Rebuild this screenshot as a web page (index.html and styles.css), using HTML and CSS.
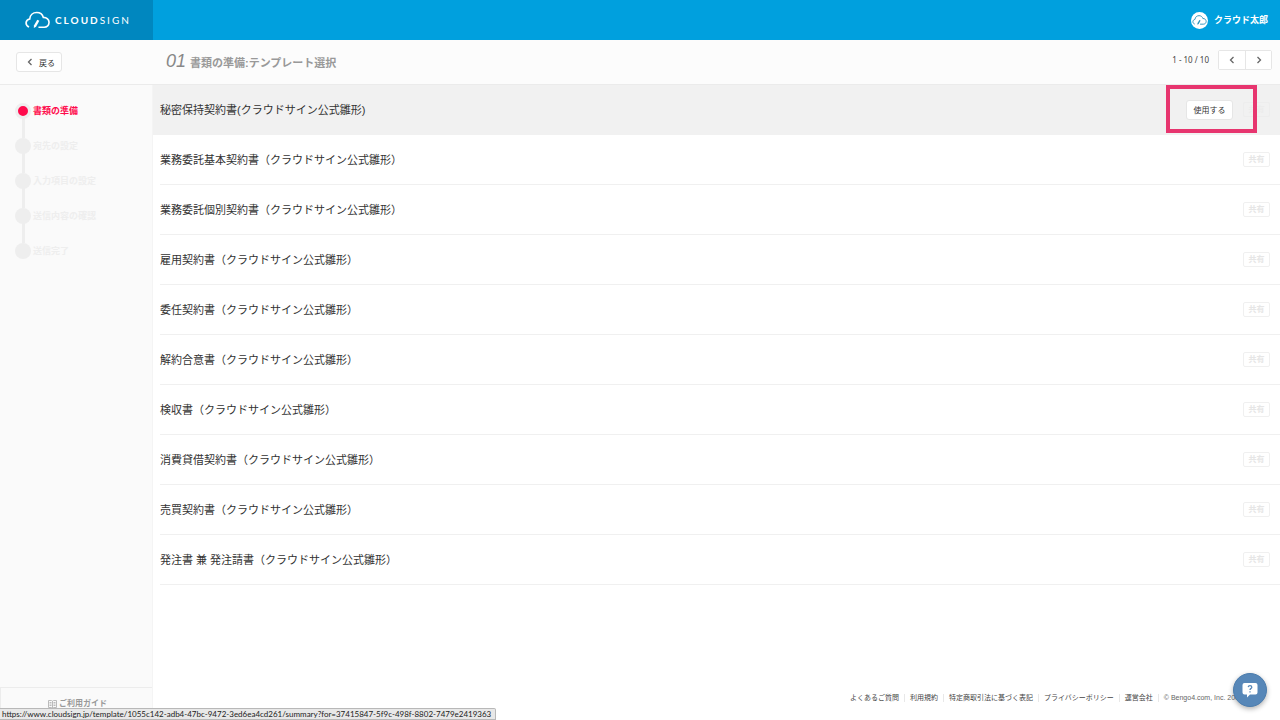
FILE: index.html
```html
<!DOCTYPE html>
<html lang="ja">
<head>
<meta charset="utf-8">
<meta name="viewport" content="width=device-width, initial-scale=1">
<title>CLOUDSIGN</title>
<link rel="stylesheet" href="styles.css">
</head>
<body>
<svg class="defs" aria-hidden="true">
  <symbol id="cloud" viewBox="0 0 26 18">
    <path d="M4.2 16.4C-.2 14.4 .2 8.700 4.900 7.900C5.200 3.800 8.200 1.200 12.200 1.200C15.600 1.200 18.200 3.200 19.100 6.300C22.600 6.200 25 8.600 25 11.400C25 14.400 22.800 16.500 20 16.500H14" fill="none" stroke="currentColor" stroke-width="1.700"/>
    <path d="M12.800 8.800L14.900 9.900L11.500 16L9.200 17.400L9.300 14.800Z" fill="currentColor"/>
  </symbol>
</svg>
<header class="topbar">
  <a class="brand" href="#"><svg class="brand-mark" aria-hidden="true"><use href="#cloud"/></svg><span class="brand-name"><b>CLOUD</b>SIGN</span></a>
  <a class="user" href="#"><span class="avatar"><svg class="avatar-mark" aria-hidden="true"><use href="#cloud"/></svg></span>クラウド太郎</a>
</header>
<div class="subbar">
  <div class="back-area"><button class="btn back" type="button"><svg class="chevron" viewBox="0 0 6 8" aria-hidden="true"><path d="M4.5 1L1.5 4L4.5 7"/></svg>戻る</button></div>
  <h1 class="title"><span class="title-number">01</span>書類の準備:テンプレート選択</h1>
  <div class="pager">
    <span class="range">1 - 10 / 10</span>
    <div class="pager-buttons">
      <button type="button" aria-label="前へ"><svg class="chevron" viewBox="0 0 6 8" aria-hidden="true"><path d="M4.5 1L1.5 4L4.5 7"/></svg></button>
      <button type="button" aria-label="次へ"><svg class="chevron" viewBox="0 0 6 8" aria-hidden="true"><path d="M1.5 1L4.5 4L1.5 7"/></svg></button>
    </div>
  </div>
</div>
<div class="body">
  <aside class="sidebar">
    <ol class="steps">
      <li class="step current">書類の準備</li>
      <li class="step">宛先の設定</li>
      <li class="step">入力項目の設定</li>
      <li class="step">送信内容の確認</li>
      <li class="step">送信完了</li>
    </ol>
    <a class="guide" href="#"><svg class="book" viewBox="0 0 9 10" aria-hidden="true"><path d="M.5 1.5H3.5L4.5 2.2L5.5 1.5H8.5V8.5H5.5L4.5 9.2L3.5 8.5H.5ZM4.5 2V9M1.5 3.5H3.5M1.5 5H3.5M1.5 6.5H3.5M5.5 3.5H7.5M5.5 5H7.5M5.5 6.5H7.5"/></svg>ご利用ガイド</a>
  </aside>
  <main class="main">
    <ul class="templates">
      <li class="row selected"><span class="name">秘密保持契約書(クラウドサイン公式雛形)</span><span class="use"><button class="btn" type="button">使用する</button></span><span class="share">共有</span></li>
      <li class="row"><span class="name">業務委託基本契約書（クラウドサイン公式雛形）</span><span class="share">共有</span></li>
      <li class="row"><span class="name">業務委託個別契約書（クラウドサイン公式雛形）</span><span class="share">共有</span></li>
      <li class="row"><span class="name">雇用契約書（クラウドサイン公式雛形）</span><span class="share">共有</span></li>
      <li class="row"><span class="name">委任契約書（クラウドサイン公式雛形）</span><span class="share">共有</span></li>
      <li class="row"><span class="name">解約合意書（クラウドサイン公式雛形）</span><span class="share">共有</span></li>
      <li class="row"><span class="name">検収書（クラウドサイン公式雛形）</span><span class="share">共有</span></li>
      <li class="row"><span class="name">消費貸借契約書（クラウドサイン公式雛形）</span><span class="share">共有</span></li>
      <li class="row"><span class="name">売買契約書（クラウドサイン公式雛形）</span><span class="share">共有</span></li>
      <li class="row"><span class="name">発注書 兼 発注請書（クラウドサイン公式雛形）</span><span class="share">共有</span></li>
    </ul>
    <footer class="footer">
      <a href="#">よくあるご質問</a>
      <a href="#">利用規約</a>
      <a href="#">特定商取引法に基づく表記</a>
      <a href="#">プライバシーポリシー</a>
      <a href="#">運営会社</a>
      <span class="copyright">© Bengo4.com, Inc. 200</span>
    </footer>
  </main>
</div>
<button class="help" type="button" aria-label="ヘルプ"><svg class="bubble" viewBox="0 0 16 16" aria-hidden="true"><path d="M2.5 1H13.500Q15.500 1 15.500 3V10.500Q15.500 12.500 13.500 12.500H8L5 15.500V12.500H2.500Q.5 12.500 .5 10.500V3Q.5 1 2.500 1Z" fill="#fff"/><path d="M6.200 5.200Q6.400 3.700 8 3.700Q9.800 3.700 9.800 5.200Q9.800 6 8.800 6.600Q8 7.100 8 8.100M8 9.200V10.500" fill="none" stroke="#5787b8" stroke-width="1.300"/></svg></button>
<div class="status">https://www.cloudsign.jp/template/1055c142-adb4-47bc-9472-3ed6ea4cd261/summary?for=37415847-5f9c-498f-8802-7479e2419363</div>
</body>
</html>
```
FILE: styles.css
```css
*, *::before, *::after { box-sizing: border-box; }
body {
  margin: 0;
  min-height: 100vh;
  display: flex;
  flex-direction: column;
  background: #fff;
  color: #333;
  font-family: "Liberation Sans", "Noto Sans CJK JP", sans-serif;
  font-size: 11px;
  line-height: 16px;
}
a { color: inherit; text-decoration: none; }
ul, ol { margin: 0; padding: 0; list-style: none; }
button { font-family: inherit; color: inherit; padding: 0; cursor: pointer; }
.defs { position: absolute; width: 0; height: 0; }

.topbar {
  height: 40px;
  display: flex;
  justify-content: space-between;
  background: #00a0de;
  color: #fff;
}
.brand {
  width: 153px;
  padding-left: 25px;
  display: flex;
  align-items: center;
  gap: 5px;
  background: #0087bf;
}
.brand-mark { width: 25px; height: 18px; }
.brand-name { font-family: Lato, sans-serif; font-size: 10px; letter-spacing: 2px; }
.brand-name b { font-weight: bold; }
.user {
  display: flex;
  align-items: center;
  gap: 6px;
  padding-right: 12px;
  font-size: 9px;
  font-weight: bold;
}
.avatar {
  width: 17px;
  height: 17px;
  border-radius: 50%;
  background: #fff;
  color: #2a93bd;
  display: flex;
  align-items: center;
  justify-content: center;
}
.avatar-mark { width: 15px; height: 10px; }

.subbar {
  height: 45px;
  display: flex;
  align-items: center;
  background: #fcfcfc;
  border-bottom: 1px solid #ebebeb;
}
.back-area { width: 153px; padding-left: 16px; }
.btn {
  height: 20px;
  padding: 0 6px;
  border: 1px solid #e6e6e6;
  border-radius: 3px;
  background: #fff;
  font-size: 8px;
}
.back {
  width: 46px;
  display: flex;
  align-items: center;
  justify-content: flex-end;
  gap: 6px;
}
.chevron {
  width: 6px;
  height: 8px;
  fill: none;
  stroke: #666;
  stroke-width: 1.3;
}
.title {
  flex: 1;
  margin: 0;
  padding-left: 13px;
  display: flex;
  align-items: baseline;
  gap: 4px;
  color: #999;
  font-size: 11px;
}
.title-number { font-size: 18px; font-weight: normal; font-style: italic; color: #888; }
.pager {
  display: flex;
  align-items: center;
  gap: 9px;
  padding: 0 8px 4px 0;
}
.range { font-family: "Noto Sans", sans-serif; font-size: 8px; color: #444; }
.pager-buttons { display: flex; border: 1px solid #e6e6e6; border-radius: 2px; }
.pager-buttons button {
  width: 26px;
  height: 18px;
  border: 0;
  background: #fff;
  display: flex;
  align-items: center;
  justify-content: center;
}
.pager-buttons button + button { border-left: 1px solid #e6e6e6; }

.body { flex: 1; display: flex; }
.sidebar {
  width: 153px;
  display: flex;
  flex-direction: column;
  justify-content: space-between;
  background: #fafafa;
  border-right: 1px solid #f4f4f4;
}
.steps { padding: 8px 0 0 15px; }
.step {
  position: relative;
  height: 35px;
  display: flex;
  align-items: center;
  gap: 2px;
  color: #eee;
  font-size: 9px;
  font-weight: bold;
}
.step::before {
  content: "";
  width: 16px;
  height: 16px;
  border-radius: 50%;
  background: #eee;
}
.step:not(:last-child)::after {
  content: "";
  position: absolute;
  left: 7px;
  top: 25px;
  width: 3px;
  height: 20px;
  background: #eee;
}
.current { color: #ff0a4c; }
.step.current::before { background: #ff0a4c; border: 3px solid #eee; }
.guide {
  height: 33px;
  display: flex;
  align-items: center;
  justify-content: center;
  gap: 2px;
  padding-left: 2px;
  border: 1px solid #ececec;
  border-width: 1px 0 0 1px;
  color: #999;
  font-size: 8px;
  font-weight: bold;
}
.book { width: 9px; height: 10px; fill: none; stroke: #bbb; stroke-width: 1; }

.main {
  flex: 1;
  display: flex;
  flex-direction: column;
  justify-content: space-between;
}
.row {
  height: 50px;
  margin-left: 7px;
  padding-right: 10px;
  display: flex;
  align-items: center;
  border-bottom: 1px solid #f0f0f0;
}
.selected { margin-left: 0; padding-left: 7px; background: #f1f1f1; border-color: #f1f1f1; }
.name { flex: 1; }
.use {
  position: relative;
  margin-right: 10px;
}
.use::after {
  content: "";
  position: absolute;
  inset: -15px -24px -13px -20px;
  border: 4px solid #e7356f;
  pointer-events: none;
}
.use .btn { display: block; width: 47px; }
.share {
  width: 27px;
  height: 15px;
  border: 1px solid #f0f0f0;
  border-radius: 2px;
  color: #e6e6e6;
  font-size: 8px;
  font-weight: bold;
  line-height: 13px;
  text-align: center;
}
.selected .share { border-color: #ededed; color: #ececec; }
.footer {
  display: flex;
  justify-content: flex-end;
  padding: 0 41px 14px 0;
  color: #444;
  font-size: 7px;
  line-height: 16px;
}
.footer > * + * { position: relative; margin-left: 11px; }
.footer > * + *::before {
  content: "";
  position: absolute;
  left: -6px;
  top: 4px;
  height: 8px;
  border-left: 1px solid #e8e8e8;
}
.copyright { color: #666; }
.help {
  position: fixed;
  right: 13px;
  bottom: 13px;
  width: 34px;
  height: 34px;
  border: 1px solid #4b7cad;
  border-radius: 50%;
  background: #5787b8;
  box-shadow: 0 2px 5px rgba(0, 0, 0, .3);
  display: flex;
  align-items: center;
  justify-content: center;
}
.bubble { width: 16px; height: 16px; }
.status {
  position: fixed;
  left: 0;
  bottom: 0;
  padding: 0 4px 0 2px;
  border: 1px solid #b8b8b8;
  border-left: 0;
  border-radius: 0 2px 0 0;
  background: #e8e8e8;
  color: #222;
  font-family: Lato, sans-serif;
  font-size: 8px;
  line-height: 10px;
  white-space: nowrap;
}
```
